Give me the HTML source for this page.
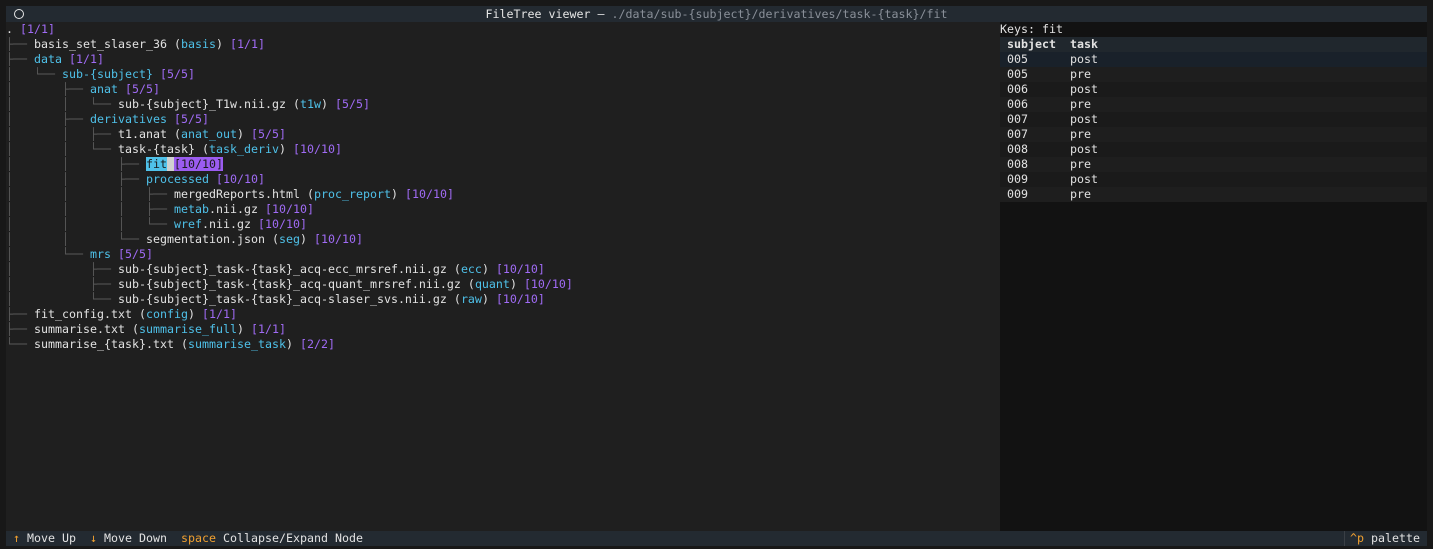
<!DOCTYPE html>
<html><head><meta charset="utf-8"><style>
html,body{margin:0;padding:0;background:#181818;width:1433px;height:549px;overflow:hidden}
body{font-family:"DejaVu Sans Mono","Liberation Mono",monospace;font-size:11.63px;color:#e2e2e2;position:relative}
.hdr{position:absolute;left:6px;top:6px;width:1421px;height:16px;background:#232a31;}
.hdr .t{position:absolute;left:0;right:0;text-align:center;top:0;line-height:16px;color:#e6e6e6}
.hdr .g{color:#8a9099}
.circ{position:absolute;left:8px;top:3px;width:8px;height:8px;border:1.5px solid #e6e6e6;border-radius:50%}
.left{position:absolute;left:6px;top:22px;width:994px;height:509px;background:#1f1f1f}
pre{margin:0;font:inherit;line-height:15px;white-space:pre}
.l{color:#5a5a5a}.c{color:#4fc1e9}.p{color:#a06bf5}
.sel1{background:#4fc1e9;color:#1a1a1a}.sel2{background:#d0d0d0}.sel3{background:#9b5cf0;color:#1a1a1a}
.right{position:absolute;left:1000px;top:22px;width:427px;height:509px;background:#121212}
.row{height:15px;line-height:15px;position:relative}
.row span{position:absolute}
.a{left:7px}.b{left:70px}
.foot{position:absolute;left:6px;top:531px;width:1421px;height:15px;background:#232a31;line-height:15px}
.o{color:#f0a030}
</style></head><body>
<div class="hdr"><div class="circ"></div><div class="t">FileTree viewer — <span class="g">./data/sub-{subject}/derivatives/task-{task}/fit</span></div></div>
<div class="left"><pre>. <span class="p">[1/1]</span>
<span class="l">├── </span>basis_set_slaser_36 (<span class="c">basis</span>) <span class="p">[1/1]</span>
<span class="l">├── </span><span class="c">data</span> <span class="p">[1/1]</span>
<span class="l">│   └── </span><span class="c">sub-{subject}</span> <span class="p">[5/5]</span>
<span class="l">│       ├── </span><span class="c">anat</span> <span class="p">[5/5]</span>
<span class="l">│       │   └── </span>sub-{subject}_T1w.nii.gz (<span class="c">t1w</span>) <span class="p">[5/5]</span>
<span class="l">│       ├── </span><span class="c">derivatives</span> <span class="p">[5/5]</span>
<span class="l">│       │   ├── </span>t1.anat (<span class="c">anat_out</span>) <span class="p">[5/5]</span>
<span class="l">│       │   └── </span>task-{task} (<span class="c">task_deriv</span>) <span class="p">[10/10]</span>
<span class="l">│       │       ├── </span><span class="sel1">fit</span><span class="sel2"> </span><span class="sel3">[10/10]</span>
<span class="l">│       │       ├── </span><span class="c">processed</span> <span class="p">[10/10]</span>
<span class="l">│       │       │   ├── </span>mergedReports.html (<span class="c">proc_report</span>) <span class="p">[10/10]</span>
<span class="l">│       │       │   ├── </span><span class="c">metab</span>.nii.gz <span class="p">[10/10]</span>
<span class="l">│       │       │   └── </span><span class="c">wref</span>.nii.gz <span class="p">[10/10]</span>
<span class="l">│       │       └── </span>segmentation.json (<span class="c">seg</span>) <span class="p">[10/10]</span>
<span class="l">│       └── </span><span class="c">mrs</span> <span class="p">[5/5]</span>
<span class="l">│           ├── </span>sub-{subject}_task-{task}_acq-ecc_mrsref.nii.gz (<span class="c">ecc</span>) <span class="p">[10/10]</span>
<span class="l">│           ├── </span>sub-{subject}_task-{task}_acq-quant_mrsref.nii.gz (<span class="c">quant</span>) <span class="p">[10/10]</span>
<span class="l">│           └── </span>sub-{subject}_task-{task}_acq-slaser_svs.nii.gz (<span class="c">raw</span>) <span class="p">[10/10]</span>
<span class="l">├── </span>fit_config.txt (<span class="c">config</span>) <span class="p">[1/1]</span>
<span class="l">├── </span>summarise.txt (<span class="c">summarise_full</span>) <span class="p">[1/1]</span>
<span class="l">└── </span>summarise_{task}.txt (<span class="c">summarise_task</span>) <span class="p">[2/2]</span></pre></div>
<div class="right">
<div class="row"><span style="left:0">Keys: fit</span></div>
<div class="row" style="background:#20272d;font-weight:bold"><span class="a">subject</span><span class="b">task</span></div>
<div class="row" style="background:#19212a"><span class="a">005</span><span class="b">post</span></div>
<div class="row" style="background:#1e1e1e"><span class="a">005</span><span class="b">pre</span></div>
<div class="row" style="background:#1a1a1a"><span class="a">006</span><span class="b">post</span></div>
<div class="row" style="background:#1e1e1e"><span class="a">006</span><span class="b">pre</span></div>
<div class="row" style="background:#1a1a1a"><span class="a">007</span><span class="b">post</span></div>
<div class="row" style="background:#1e1e1e"><span class="a">007</span><span class="b">pre</span></div>
<div class="row" style="background:#1a1a1a"><span class="a">008</span><span class="b">post</span></div>
<div class="row" style="background:#1e1e1e"><span class="a">008</span><span class="b">pre</span></div>
<div class="row" style="background:#1a1a1a"><span class="a">009</span><span class="b">post</span></div>
<div class="row" style="background:#1e1e1e"><span class="a">009</span><span class="b">pre</span></div>
</div>
<div class="foot"><pre> <span class="o">↑</span> Move Up  <span class="o">↓</span> Move Down  <span class="o">space</span> Collapse/Expand Node</pre>
<pre style="position:absolute;right:7px;top:0;border-left:1px solid #3a3f45;padding-left:5px"><span class="o">^p</span> palette</pre></div>
</body></html>
